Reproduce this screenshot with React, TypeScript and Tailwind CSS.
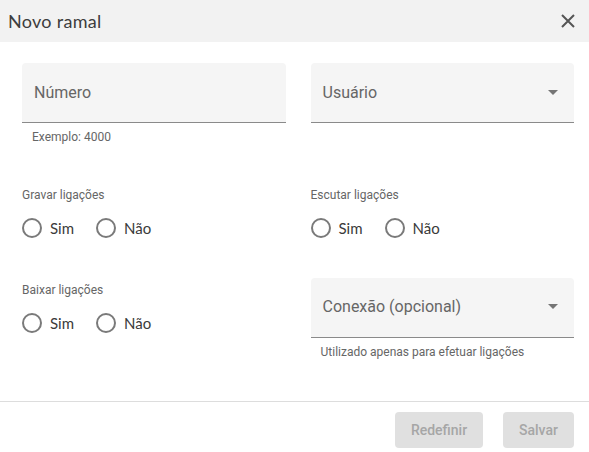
import React from "react";

const roboto = { fontFamily: "Roboto, 'Liberation Sans', sans-serif" };
const display = { fontFamily: "Lato, 'Open Sans', sans-serif" };

function Field({ label, select }: { label: string; select?: boolean }) {
  return (
    <div className="flex h-[60px] items-center justify-between rounded-t-[4px] border-b border-[#8a8a8a] bg-[#f5f5f5] pl-3 pr-[9px]">
      <span className="text-[16px] text-[#666]" style={roboto}>
        {label}
      </span>
      {select && (
        <svg width="24" height="24" viewBox="0 0 24 24" className="-mt-[2px]">
          <path d="M7 10l5 5 5-5z" fill="#757575" />
        </svg>
      )}
    </div>
  );
}

function Helper({ text }: { text: string }) {
  return (
    <p className="mt-[6px] pl-[10px] text-[12px] leading-4 text-[#666]" style={roboto}>
      {text}
    </p>
  );
}

function Radio({ label }: { label: string }) {
  return (
    <label className="flex items-center gap-2">
      <span className="h-5 w-5 rounded-full border-2 border-[#7a7a7a]" />
      <span className="text-[15px] text-[#3a3a3a]" style={display}>
        {label}
      </span>
    </label>
  );
}

function RadioGroup({ label }: { label: string }) {
  return (
    <div>
      <p className="text-[12px] leading-4 text-[#666]" style={roboto}>
        {label}
      </p>
      <div className="mt-[14px] flex gap-[22px]">
        <Radio label="Sim" />
        <Radio label="Não" />
      </div>
    </div>
  );
}

export default function App() {
  return (
    <div className="h-[452px] w-[589px] overflow-hidden bg-white">
      {/* Header */}
      <div className="flex h-[42px] items-center justify-between bg-[#f2f2f2] pl-2 pr-[13px]">
        <h1 className="text-[18px] tracking-[0.3px] text-[#3d3d3d]" style={display}>
          Novo ramal
        </h1>
        <svg width="16" height="16" viewBox="0 0 16 16">
          <path d="M2 2l12 12M14 2L2 14" stroke="#555" strokeWidth="2" />
        </svg>
      </div>

      {/* Body */}
      <div className="h-[359px] pl-[22px] pr-[15px] pt-[21px]">
        <div className="grid grid-cols-2 gap-x-[25px]">
          <div>
            <Field label="Número" />
            <Helper text="Exemplo: 4000" />
          </div>
          <div>
            <Field label="Usuário" select />
          </div>
        </div>

        <div className="mt-[42px] grid grid-cols-2 gap-x-[25px]">
          <RadioGroup label="Gravar ligações" />
          <RadioGroup label="Escutar ligações" />
        </div>

        <div className="mt-[38px] grid grid-cols-2 gap-x-[25px]">
          <div className="pt-[4px]">
            <RadioGroup label="Baixar ligações" />
          </div>
          <div>
            <Field label="Conexão (opcional)" select />
            <Helper text="Utilizado apenas para efetuar ligações" />
          </div>
        </div>
      </div>

      {/* Footer */}
      <div className="flex justify-end gap-5 border-t border-[#ddd] pr-[15px] pt-[10px]">
        <button
          className="h-9 w-[88px] rounded-[4px] bg-[#e0e0e0] text-[14px] font-medium text-[#a6a6a6]"
          style={roboto}
        >
          Redefinir
        </button>
        <button
          className="h-9 w-[71px] rounded-[4px] bg-[#e0e0e0] text-[14px] font-medium text-[#a6a6a6]"
          style={roboto}
        >
          Salvar
        </button>
      </div>
    </div>
  );
}
